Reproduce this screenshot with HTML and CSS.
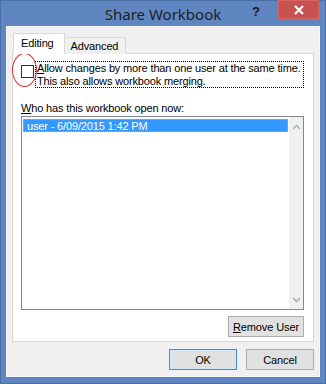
FILE: index.html
```html
<!DOCTYPE html>
<html lang="en">
<head>
    <meta charset="UTF-8">
    <meta name="viewport" content="width=device-width, initial-scale=1.0">
    <title>Share Workbook</title>
    <link rel="stylesheet" href="styles.css">
</head>
<body>
    <div class="window">
        <div class="titlebar">
            <div class="title">Share Workbook</div>
            <div class="help">?</div>
            <div class="close">
                <svg width="10" height="10" viewBox="0 0 10 10"><path d="M1 1L9 9M9 1L1 9" stroke="#fff" stroke-width="2.2"/></svg>
            </div>
        </div>

        <div class="client">
            <div class="tabs">
                <div class="tab active">Editing</div>
                <div class="tab">Advanced</div>
            </div>

            <div class="panel">
                <div class="share-row">
                    <span class="checkbox"></span>
                    <div class="focus-label"><u>A</u>llow changes by more than one user at the same time.<br>This also allows workbook merging.</div>
                    <span class="annotation"></span>
                </div>

                <div class="list-label"><u>W</u>ho has this workbook open now:</div>
                <div class="listbox">
                    <div class="items">
                        <div class="item selected">user - 6/09/2015 1:42 PM</div>
                    </div>
                    <div class="scrollbar">
                        <svg width="9" height="6" viewBox="0 0 9 6"><path d="M1 5L4.5 1.5L8 5" fill="none" stroke="#a6a6a6" stroke-width="1.3"/></svg>
                        <svg width="9" height="6" viewBox="0 0 9 6"><path d="M1 1L4.5 4.5L8 1" fill="none" stroke="#a6a6a6" stroke-width="1.3"/></svg>
                    </div>
                </div>

                <div class="panel-actions">
                    <button class="btn remove-btn"><u>R</u>emove User</button>
                </div>
            </div>

            <div class="footer">
                <button class="btn ok-btn">OK</button>
                <button class="btn">Cancel</button>
            </div>
        </div>
    </div>
</body>
</html>
```

FILE: styles.css
```css
body {
    margin: 0;
    font-family: "Liberation Sans", Arial, sans-serif;
    font-size: 11px;
    letter-spacing: -0.15px;
    color: #000;
}
.window {
    width: 326px;
    height: 384px;
    box-sizing: border-box;
    background-color: #5f86c0;
    border: 1px solid #4a6ea6;
    display: flex;
    flex-direction: column;
}
.titlebar {
    height: 25px;
    display: flex;
    align-items: flex-start;
    position: relative;
}
.title {
    position: absolute;
    left: 0;
    right: 0;
    top: 3px;
    text-align: center;
    font-family: "Noto Sans", sans-serif;
    font-size: 15px;
    letter-spacing: 0;
    color: #1e1e1e;
}
.help {
    margin-left: auto;
    margin-top: 3px;
    width: 18px;
    font-weight: bold;
    font-size: 13px;
    color: #1a1a1a;
    text-align: center;
    position: relative;
}
.close {
    width: 41px;
    height: 19px;
    margin: -1px 6px 0 13px;
    background-color: #c75050;
    border: 1px solid #d8655f;
    box-sizing: border-box;
    display: flex;
    align-items: center;
    justify-content: center;
    position: relative;
}
.client {
    flex: 1;
    margin: 0 5px 6px 5px;
    background-color: #f0f0f0;
    border: 1px solid #f8f8f8;
    padding: 7px 5px 0 5px;
    display: flex;
    flex-direction: column;
}
.tabs {
    display: flex;
    align-items: flex-end;
    height: 20px;
    padding-left: 1px;
    position: relative;
    z-index: 1;
    margin-bottom: -1px;
}
.tab {
    height: 16px;
    padding: 0 7px 0 6px;
    line-height: 16px;
    border: 1px solid #d9d9d9;
    border-bottom: none;
    background-color: #f0f0f0;
}
.tab.active {
    height: 20px;
    line-height: 19px;
    background-color: #fff;
    padding: 0 10px 0 7px;
}
.tab.active + .tab {
    border-left: none;
}
.panel {
    height: 289px;
    box-sizing: border-box;
    background-color: #fff;
    border: 1px solid #d9d9d9;
    padding: 9px 8px 0 8px;
    display: flex;
    flex-direction: column;
}
.share-row {
    display: flex;
    align-items: flex-start;
    position: relative;
    height: 38px;
}
.checkbox {
    width: 11px;
    height: 11px;
    border: 1px solid #333;
    margin-top: 2px;
    flex-shrink: 0;
    background-color: #fff;
}
.focus-label {
    margin-left: 1px;
    width: 266px;
    padding: 0 0 0 1px;
    border: 1px dotted #000;
    line-height: 12.5px;
    margin-top: -2px;
    white-space: nowrap;
}
.annotation {
    position: absolute;
    left: -9px;
    top: -10px;
    width: 23px;
    height: 32px;
    border: 1px solid #e03030;
    border-radius: 50%;
}
.list-label {
    line-height: 14px;
}
.listbox {
    margin-top: 1px;
    width: 283px;
    height: 194px;
    box-sizing: border-box;
    border: 1px solid #828790;
    display: flex;
    background-color: #fff;
}
.items {
    flex: 1;
    padding: 2px 1px;
}
.item {
    height: 13px;
    line-height: 12px;
    padding-left: 3px;
    color: #fff;
}
.item.selected {
    background-color: #3399ff;
    border: 1px dotted #7fbfff;
    box-sizing: border-box;
}
.scrollbar {
    width: 14px;
    background-color: #f0f0f0;
    display: flex;
    flex-direction: column;
    justify-content: space-between;
    align-items: center;
    padding: 7px 0 6px;
}
.panel-actions {
    display: flex;
    justify-content: flex-end;
    margin-top: 6px;
    width: 283px;
}
.btn {
    font-family: "Liberation Sans", Arial, sans-serif;
    font-size: 11px;
    letter-spacing: -0.1px;
    height: 21px;
    padding: 0;
    background-color: #e1e1e1;
    border: 1px solid #adadad;
    color: #000;
}
.remove-btn {
    width: 76px;
}
.footer {
    display: flex;
    justify-content: flex-end;
    gap: 9px;
    margin-top: 7px;
}
.footer .btn {
    width: 68px;
}
.ok-btn {
    border-color: #3c8fe0;
    box-shadow: inset 0 0 0 1px #cfe6fb;
}
```
